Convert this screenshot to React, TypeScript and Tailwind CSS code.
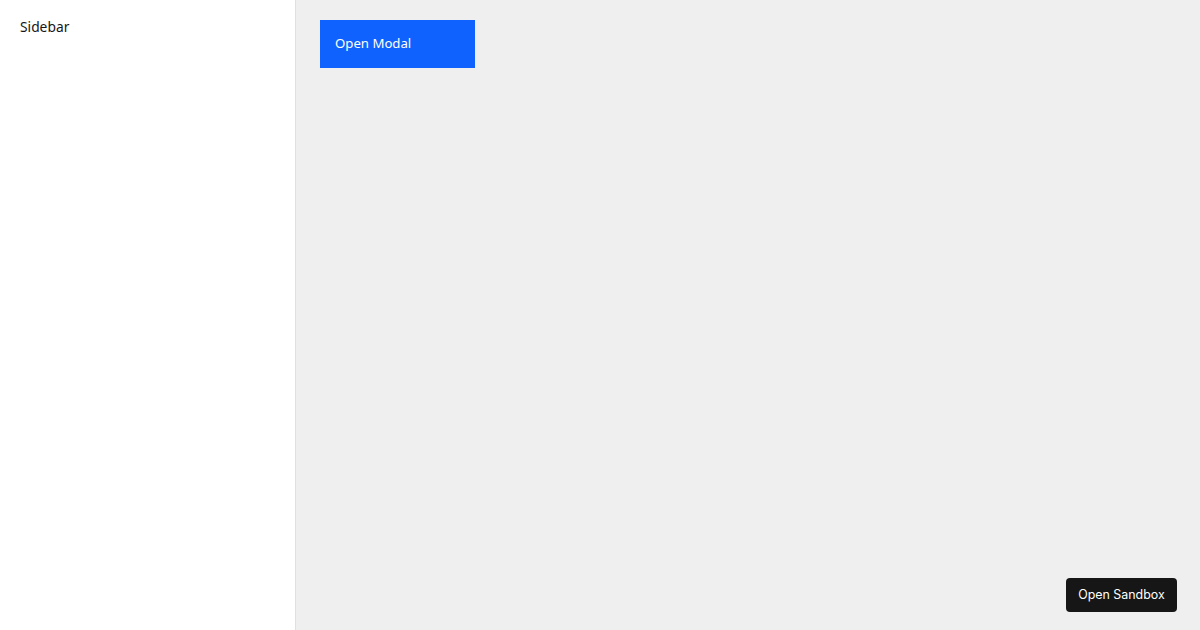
export default function App() {
  return (
    <div className="flex h-[630px] w-[1200px] font-['Noto_Sans',sans-serif] text-[#161616]">
      <aside className="w-[296px] shrink-0 border-r border-[#e0e0e0] bg-white px-5 py-[17px] text-[13.8px]">
        Sidebar
      </aside>
      <main className="relative flex-1 bg-[#efefef] p-6 pt-5">
        <button
          type="button"
          className="flex h-12 w-[155px] items-center bg-[#0f62fe] px-[15px] text-left text-[13.2px] text-white"
        >
          Open Modal
        </button>
        <button
          type="button"
          className="absolute bottom-[18px] right-[23px] h-[34px] w-[111px] rounded-[4px] bg-[#161616] font-['Inter',sans-serif] text-[12.4px] text-white"
        >
          Open Sandbox
        </button>
      </main>
    </div>
  );
}
